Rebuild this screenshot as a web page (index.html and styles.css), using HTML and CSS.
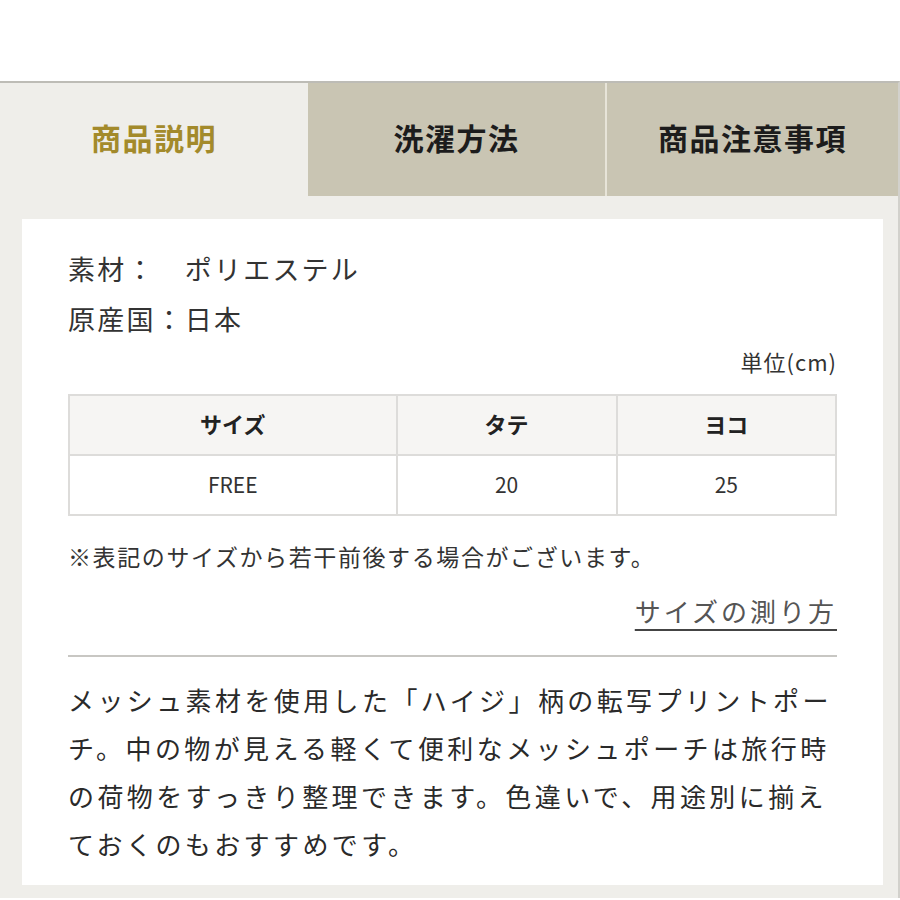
FILE: index.html
```html
<!DOCTYPE html>
<html lang="ja">
<head>
<meta charset="utf-8">
<link rel="stylesheet" href="styles.css">
</head>
<body>
<div class="top-space"></div>
<section class="product-info">
  <nav class="tabs">
    <div class="tab active">商品説明</div>
    <div class="tab">洗濯方法</div>
    <div class="tab last">商品注意事項</div>
  </nav>
  <div class="card">
    <p class="spec">素材：　ポリエステル</p>
    <p class="spec">原産国：日本</p>
    <p class="unit">単位(cm)</p>
    <table class="size-table">
      <colgroup>
        <col class="c1"><col class="c2"><col class="c3">
      </colgroup>
      <thead>
        <tr><th>サイズ</th><th>タテ</th><th>ヨコ</th></tr>
      </thead>
      <tbody>
        <tr><td>FREE</td><td>20</td><td>25</td></tr>
      </tbody>
    </table>
    <p class="note">※表記のサイズから若干前後する場合がございます。</p>
    <div class="link-row"><a class="measure-link" href="#">サイズの測り方</a></div>
    <hr class="divider">
    <p class="desc">メッシュ素材を使用した「ハイジ」柄の転写プリントポー<br>チ。中の物が見える軽くて便利なメッシュポーチは旅行時<br>の荷物をすっきり整理できます。色違いで、用途別に揃え<br>ておくのもおすすめです。</p>
  </div>
</section>
</body>
</html>
```
FILE: styles.css
```css
html, body {
  margin: 0;
  padding: 0;
  background: #ffffff;
}
body {
  font-family: "Noto Sans CJK JP", "Noto Sans", sans-serif;
  color: #333;
  width: 900px;
  height: 900px;
  overflow: hidden;
}
.top-space {
  height: 81px;
  background: #fff;
}
.product-info {
  background: #efeeea;
  border-top: 2px solid #bdbcb6;
  border-right: 2px solid #d2d1cc;
  height: 817px;
  box-sizing: border-box;
}
.tabs {
  display: grid;
  grid-template-columns: 308px 297px 1fr;
  height: 113px;
}
.tab {
  display: flex;
  align-items: center;
  justify-content: center;
  padding-bottom: 6px;
  box-sizing: border-box;
  background: #c9c5b3;
  color: #1c1c1c;
  font-size: 30px;
  font-weight: 700;
  letter-spacing: 1.5px;
}
.tab.active {
  background: #efeeea;
  color: #a38a2b;
}
.tab.last {
  border-left: 2px solid #e7e4d8;
}
.card {
  background: #fff;
  margin: 23px 15px 0 22px;
  padding: 25px 46px 17px 46px;
}
.spec {
  margin: 0;
  font-size: 27px;
  line-height: 50px;
  letter-spacing: 2.2px;
  color: #333;
}
.unit {
  margin: 0 0 16px;
  text-align: right;
  font-size: 22px;
  line-height: 34px;
  letter-spacing: 1px;
  color: #333;
}
.size-table {
  width: 100%;
  border-collapse: collapse;
  table-layout: fixed;
}
.size-table .c1 { width: 42.7%; }
.size-table .c2 { width: 28.7%; }
.size-table th,
.size-table td {
  border: 2px solid #dddcda;
  box-sizing: border-box;
  height: 60px;
  padding: 0;
  text-align: center;
  font-size: 21px;
  line-height: 30px;
}
.size-table th {
  background: #f6f5f3;
  font-weight: 700;
  color: #222;
  padding-bottom: 5px;
  font-size: 22px;
}
.size-table td {
  color: #333;
  padding-bottom: 2px;
}
.note {
  margin: 22px 0 0;
  font-size: 23px;
  line-height: 36px;
  letter-spacing: 1.6px;
  color: #333;
}
.link-row {
  margin-top: 17px;
  text-align: right;
  line-height: 40px;
}
.measure-link {
  font-size: 26px;
  letter-spacing: 3px;
  color: #555;
  text-decoration: underline;
  text-decoration-thickness: 2px;
  text-underline-offset: 7px;
  text-decoration-color: #444;
}
.divider {
  margin: 20px 0 0;
  border: 0;
  height: 2px;
  background: #c8c7c3;
}
.desc {
  margin: 19px 0 0;
  font-size: 26px;
  line-height: 48px;
  letter-spacing: 3.4px;
  color: #2a2a2a;
  white-space: nowrap;
}
```
